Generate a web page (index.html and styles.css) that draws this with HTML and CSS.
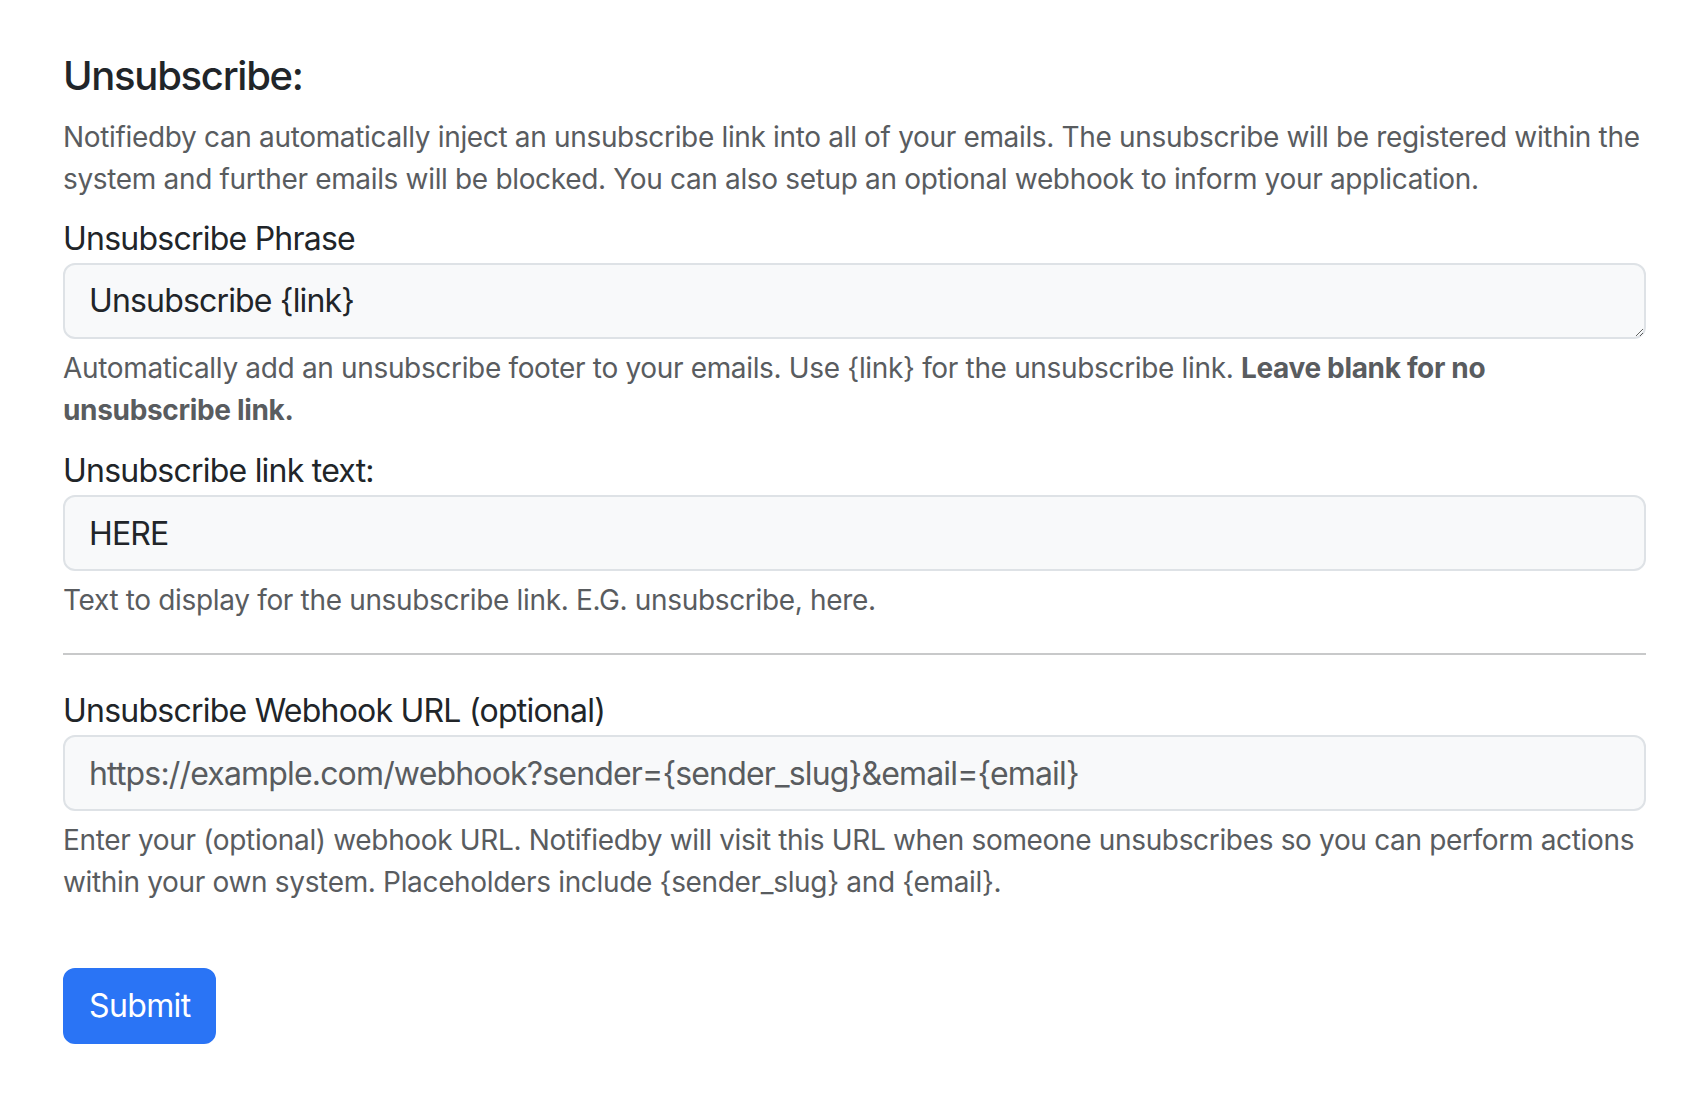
FILE: index.html
```html
<!DOCTYPE html>
<html lang="en">
<head>
<meta charset="utf-8">
<title>Unsubscribe settings</title>
<link rel="stylesheet" href="styles.css">
</head>
<body>
<main class="page">
  <form class="settings-form">
    <h5 class="section-title">Unsubscribe:</h5>
    <p class="lead-text">Notifiedby can automatically inject an unsubscribe link into all of your emails. The unsubscribe will be registered within the system and further emails will be blocked. You can also setup an optional webhook to inform your application.</p>

    <div class="field">
      <label class="field-label" for="phrase">Unsubscribe Phrase</label>
      <textarea class="field-control field-textarea" id="phrase" rows="1">Unsubscribe {link}</textarea>
      <div class="field-help">Automatically add an unsubscribe footer to your emails. Use {link} for the unsubscribe link. <strong>Leave blank for no unsubscribe link.</strong></div>
    </div>

    <div class="field">
      <label class="field-label" for="linktext">Unsubscribe link text:</label>
      <input class="field-control" id="linktext" type="text" value="HERE">
      <div class="field-help">Text to display for the unsubscribe link. E.G. unsubscribe, here.</div>
    </div>

    <hr class="divider">

    <div class="field">
      <label class="field-label" for="webhook">Unsubscribe Webhook URL (optional)</label>
      <input class="field-control" id="webhook" type="text" placeholder="https://example.com/webhook?sender={sender_slug}&amp;email={email}">
      <div class="field-help">Enter your (optional) webhook URL. Notifiedby will visit this URL when someone unsubscribes so you can perform actions within your own system. Placeholders include {sender_slug} and {email}.</div>
    </div>

    <div class="actions">
      <button class="btn-submit" type="submit">Submit</button>
    </div>
  </form>
</main>
</body>
</html>
```

FILE: styles.css
```css
html, body {
  margin: 0;
  padding: 0;
  background: #ffffff;
}

body {
  font-family: Inter, "Liberation Sans", Arial, sans-serif;
  color: #212529;
  font-size: 32px;
  line-height: 1.5;
}

.page {
  padding: 52px 60px 40px 63px;
}

.settings-form {
  display: block;
}

.section-title {
  margin: 0 0 16px 0;
  font-size: 40px;
  font-weight: 500;
  line-height: 1.2;
  letter-spacing: -0.032em;
  color: #212529;
}

.lead-text {
  margin: 0 0 15px 0;
  font-size: 28px;
  line-height: 42px;
  letter-spacing: -0.012em;
  color: #595c5f;
}

.field {
  margin-bottom: 16px;
}

.field-label {
  display: block;
  margin: 0;
  font-size: 32px;
  line-height: 48px;
  letter-spacing: -0.024em;
  color: #212529;
}

.field-control {
  display: block;
  box-sizing: border-box;
  width: 100%;
  height: 76px;
  margin: 0;
  padding: 12px 24px;
  font-family: inherit;
  font-size: 32px;
  line-height: 48px;
  letter-spacing: -0.026em;
  color: #212529;
  background: #f8f9fa;
  border: 2px solid #dee2e6;
  border-radius: 12px;
  outline: none;
}

.field-textarea {
  resize: vertical;
  overflow: hidden;
}

.field-control::placeholder {
  color: #595c5f;
  opacity: 1;
}

.field-help {
  margin-top: 8px;
  font-size: 28px;
  line-height: 42px;
  letter-spacing: -0.012em;
  color: #595c5f;
}

.field-help strong {
  font-weight: 700;
}

.divider {
  margin: 32px 0;
  border: 0;
  border-top: 2px solid #c8c9ca;
  height: 0;
}

.actions {
  margin-top: 65px;
}

.btn-submit {
  display: inline-block;
  height: 76px;
  padding: 12px 24px;
  font-family: inherit;
  font-size: 32px;
  line-height: 48px;
  letter-spacing: -0.02em;
  color: #ffffff;
  background: #2a74f5;
  border: 2px solid #2a74f5;
  border-radius: 12px;
  cursor: pointer;
}
```
